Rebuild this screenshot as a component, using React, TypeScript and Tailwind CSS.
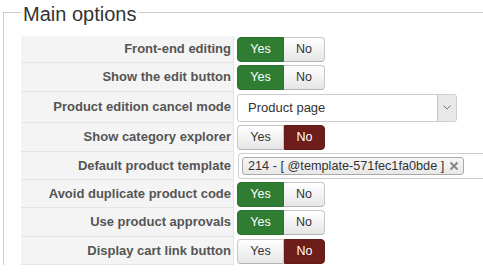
import React from "react";

type Row =
  | { label: string; kind: "toggle"; value: boolean; h: string }
  | { label: string; kind: "select"; value: string; h: string }
  | { label: string; kind: "tag"; value: string; h: string };

const rows: Row[] = [
  { label: "Front-end editing", kind: "toggle", value: true, h: "h-[27px]" },
  { label: "Show the edit button", kind: "toggle", value: true, h: "h-[29px]" },
  { label: "Product edition cancel mode", kind: "select", value: "Product page", h: "h-[31px]" },
  { label: "Show category explorer", kind: "toggle", value: false, h: "h-[29px]" },
  { label: "Default product template", kind: "tag", value: "214 - [ @template-571fec1fa0bde ]", h: "h-[28px]" },
  { label: "Avoid duplicate product code", kind: "toggle", value: true, h: "h-[28px]" },
  { label: "Use product approvals", kind: "toggle", value: true, h: "h-[29px]" },
  { label: "Display cart link button", kind: "toggle", value: false, h: "h-[28px]" },
];

const off =
  "bg-gradient-to-b from-white to-[#e6e6e6] border border-[#c8c8c8] border-b-[#b3b3b3] text-[#333]";

function Toggle({ on }: { on: boolean }) {
  return (
    <div className="flex h-[25px] text-[12.5px] leading-none">
      <div
        className={`flex w-[47px] items-center justify-center rounded-l-[4px] ${
          on ? "bg-[#2f7d32] border border-[#2a722d] text-white" : off
        }`}
      >
        Yes
      </div>
      <div
        className={`flex w-[41px] items-center justify-center rounded-r-[4px] ${
          on ? off + " border-l-0" : "bg-[#6d1d1a] border border-[#641a17] text-white"
        }`}
      >
        No
      </div>
    </div>
  );
}

function Select({ value }: { value: string }) {
  return (
    <div className="flex h-[28px] w-[220px] items-stretch rounded-[3px] border border-[#ccc] bg-white">
      <div className="flex flex-1 items-center pl-[10px] text-[13px] text-[#333]">{value}</div>
      <div className="flex w-[19px] items-center justify-center rounded-r-[2px] border-l border-[#c4c4c4] bg-[#e8e8e8]">
        <svg width="8" height="5" viewBox="0 0 8 5">
          <path d="M0.5 0.5 L4 4 L7.5 0.5" fill="none" stroke="#777" strokeWidth="1" />
        </svg>
      </div>
    </div>
  );
}

function Tag({ value }: { value: string }) {
  return (
    <div className="ml-[1px] flex h-[26px] w-[280px] items-center rounded-[3px] border border-[#ccc] bg-white pl-[3px]">
      <div className="flex h-[18px] items-center gap-[5px] rounded-[3px] border border-[#aaa] bg-gradient-to-b from-[#f6f6f6] to-[#e8e8e8] pl-[5px] pr-[4px] text-[12.7px] leading-none text-[#333]">
        <span>{value}</span>
        <svg width="10" height="10" viewBox="0 0 10 10">
          <path d="M1.5 1.5 L8.5 8.5 M8.5 1.5 L1.5 8.5" stroke="#888" strokeWidth="2" />
        </svg>
      </div>
    </div>
  );
}

export default function App() {
  return (
    <div
      className="h-[277px] w-[483px] overflow-hidden bg-white"
      style={{ fontFamily: '"Liberation Sans", Arial, sans-serif' }}
    >
      <fieldset className="ml-[3px] w-[560px] border-l border-t border-[#ccc] pl-[17px] pt-[12px]">
        <legend className="px-[2px] text-[20px] leading-[24px] text-[#333]">
          <span className="inline-block translate-y-[2px]">Main options</span>
        </legend>
        <div className="flex flex-col">
          {rows.map((r) => (
            <div key={r.label} className={`flex ${r.h}`}>
              <div className="flex w-[213px] items-center justify-end border-b border-r border-[#e4e4e4] bg-[#f4f4f4] pr-[2px] text-[13px] font-bold text-[#555]">
                {r.label}
              </div>
              <div className="flex items-center pl-[3px]">
                {r.kind === "toggle" && <Toggle on={r.value} />}
                {r.kind === "select" && <Select value={r.value} />}
                {r.kind === "tag" && <Tag value={r.value} />}
              </div>
            </div>
          ))}
        </div>
      </fieldset>
    </div>
  );
}
